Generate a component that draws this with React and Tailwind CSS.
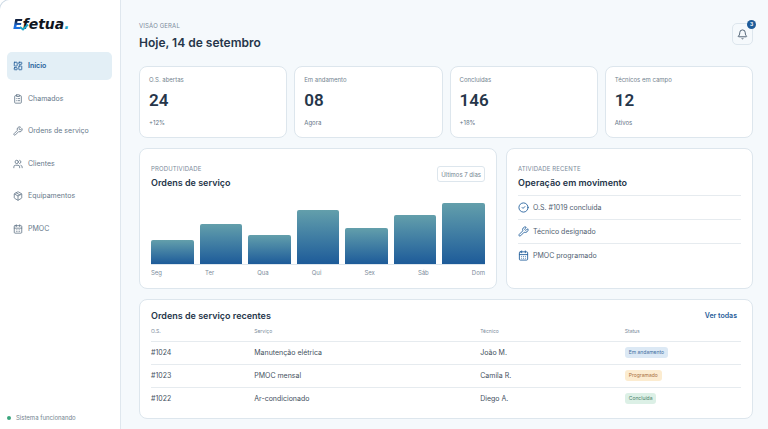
import {
  Bell,
  CalendarDays,
  CircleCheck,
  ClipboardList,
  LayoutDashboard,
  Package,
  Users,
  Wrench,
} from "lucide-react";

const navItems = [
  { label: "Início", icon: LayoutDashboard, active: true },
  { label: "Chamados", icon: ClipboardList },
  { label: "Ordens de serviço", icon: Wrench },
  { label: "Clientes", icon: Users },
  { label: "Equipamentos", icon: Package },
  { label: "PMOC", icon: CalendarDays },
];

const stats = [
  { label: "O.S. abertas", value: "24", note: "+12%" },
  { label: "Em andamento", value: "08", note: "Agora" },
  { label: "Concluídas", value: "146", note: "+18%" },
  { label: "Técnicos em campo", value: "12", note: "Ativos" },
];

const week = [
  { day: "Seg", value: 24 },
  { day: "Ter", value: 40 },
  { day: "Qua", value: 29 },
  { day: "Qui", value: 54 },
  { day: "Sex", value: 36 },
  { day: "Sáb", value: 49 },
  { day: "Dom", value: 61 },
];

const activities = [
  { label: "O.S. #1019 concluída", icon: CircleCheck },
  { label: "Técnico designado", icon: Wrench },
  { label: "PMOC programado", icon: CalendarDays },
];

const orders = [
  {
    id: "#1024",
    service: "Manutenção elétrica",
    tech: "João M.",
    status: "Em andamento",
    tone: "bg-[#dce9f5] text-[#3f6f9f]",
  },
  {
    id: "#1023",
    service: "PMOC mensal",
    tech: "Camila R.",
    status: "Programado",
    tone: "bg-[#fcecd0] text-[#a8703f]",
  },
  {
    id: "#1022",
    service: "Ar-condicionado",
    tech: "Diego A.",
    status: "Concluída",
    tone: "bg-[#dcf0e6] text-[#4a7f69]",
  },
];

function Logo() {
  return (
    <div className="relative ml-[6px] w-fit font-['DejaVu_Sans',sans-serif] font-bold italic text-[14px] leading-4 text-[#10151d]">
      <span className="bg-linear-to-b from-[#10203f] from-30% to-[#1b6fe0] to-60% bg-clip-text text-transparent">
        E
      </span>
      fetua<span className="text-[#22a7d0]">.</span>
      <svg
        className="absolute left-[6px] top-2 h-[7px] w-[10px]"
        viewBox="0 0 10 7"
        fill="none"
        stroke="#1fa3c4"
        strokeWidth="2"
        aria-hidden="true"
      >
        <path d="M1 3 L4 5.5 L9 0.5" />
      </svg>
    </div>
  );
}

function Sidebar() {
  return (
    <aside className="flex w-[121px] shrink-0 flex-col border-r border-[#dfe7ee] bg-white px-[7px] pt-4 pb-[6px]">
      <Logo />
      <nav className="mt-5 flex h-[191px] flex-col justify-between">
        {navItems.map(({ label, icon: Icon, active }) => (
          <a
            key={label}
            href="#"
            className={`flex h-7 items-center gap-[5px] rounded-[5px] px-[6px] mr-[1px] text-[7px] leading-3 ${
              active
                ? "bg-[#e3eff6] font-semibold text-[#1f5c99]"
                : "text-[#66788a]"
            }`}
          >
            <Icon className="size-[10px]" />
            {label}
          </a>
        ))}
      </nav>
      <p className="mt-auto flex items-center gap-[5px] text-[6px] leading-[10px] text-[#73838f]">
        <span className="size-1 rounded-full bg-[#3aa57c]" />
        Sistema funcionando
      </p>
    </aside>
  );
}

function Eyebrow({ children }) {
  return (
    <p className="text-[6px] leading-2 tracking-wide text-[#7b8b9b] uppercase">
      {children}
    </p>
  );
}

function StatCard({ label, value, note }) {
  return (
    <div className="rounded-lg border border-[#dde6ed] bg-white px-[9px] pt-[9px] pb-[10px]">
      <p className="text-[6px] leading-2 text-[#73838f]">{label}</p>
      <p className="my-[6px] font-['Roboto',sans-serif] text-[17px] leading-5 font-semibold text-[#26364a]">
        {value}
      </p>
      <p className="mt-[9px] text-[6px] leading-2 text-[#5f7485]">{note}</p>
    </div>
  );
}

function Productivity() {
  return (
    <section className="flex flex-col rounded-lg border border-[#dde6ed] bg-white px-[11px] pt-4 pb-[11px]">
      <div className="flex items-start justify-between">
        <div>
          <Eyebrow>Produtividade</Eyebrow>
          <h2 className="mt-1 text-[9px] leading-3 font-semibold text-[#26364a]">
            Ordens de serviço
          </h2>
        </div>
        <button className="mt-[1px] h-4 rounded-[3px] border border-[#dde6ed] px-[3px] text-[6px] text-[#73838f]">
          Últimos 7 dias
        </button>
      </div>
      <div className="mt-auto flex items-end gap-[6px] border-b border-[#dde6ed]">
        {week.map(({ day, value }) => (
          <div
            key={day}
            className="flex-1 rounded-t-[2px] bg-linear-to-b from-[#639fab] to-[#1d5b99]"
            style={{ height: value }}
          />
        ))}
      </div>
      <div className="mt-1 flex justify-between text-[6px] leading-2 text-[#7b8b9b]">
        {week.map(({ day }) => (
          <span key={day}>{day}</span>
        ))}
      </div>
    </section>
  );
}

function Activity() {
  return (
    <section className="rounded-lg border border-[#dde6ed] bg-white px-[11px] pt-4">
      <Eyebrow>Atividade recente</Eyebrow>
      <h2 className="mt-1 text-[9px] leading-3 font-semibold text-[#26364a]">
        Operação em movimento
      </h2>
      <ul className="mt-[6px]">
        {activities.map(({ label, icon: Icon }) => (
          <li
            key={label}
            className="flex h-6 items-center gap-1 border-t border-[#e6ebef] text-[7px] leading-3 text-[#4f6070]"
          >
            <Icon className="size-[11px] text-[#2a659f]" />
            {label}
          </li>
        ))}
      </ul>
    </section>
  );
}

function RecentOrders() {
  return (
    <section className="mt-[10px] rounded-lg border border-[#dde6ed] bg-white px-[11px] pt-[10px] pb-2">
      <div className="flex items-center justify-between">
        <h2 className="text-[9px] leading-3 font-semibold text-[#26364a]">
          Ordens de serviço recentes
        </h2>
        <a href="#" className="mr-1 text-[7px] leading-3 font-semibold text-[#1f5c99]">
          Ver todas
        </a>
      </div>
      <table className="w-full table-fixed text-left text-[7px] leading-3 text-[#3f5060]">
        <thead>
          <tr className="h-[19px] text-[5px] text-[#7b8b9b]">
            <th className="w-[17.5%] font-normal">O.S.</th>
            <th className="w-[38.3%] font-normal">Serviço</th>
            <th className="w-[24.5%] font-normal">Técnico</th>
            <th className="font-normal">Status</th>
          </tr>
        </thead>
        <tbody>
          {orders.map((order) => (
            <tr key={order.id} className="h-[23px] border-t border-[#e6ebef]">
              <td>{order.id}</td>
              <td>{order.service}</td>
              <td>{order.tech}</td>
              <td>
                <span
                  className={`block w-fit rounded-[3px] px-1 text-[5px] leading-[11px] ${order.tone}`}
                >
                  {order.status}
                </span>
              </td>
            </tr>
          ))}
        </tbody>
      </table>
    </section>
  );
}

export default function App() {
  return (
    <div className="flex min-h-screen overflow-hidden rounded-tl-[10px] ring-1 ring-[#cfdbe6] bg-[#f5f9fc] font-['Inter',sans-serif]">
      <Sidebar />
      <main className="min-w-0 flex-1 pt-[22px] pr-[15px] pb-[10px] pl-[18px]">
        <header className="flex items-start justify-between">
          <div>
            <Eyebrow>Visão geral</Eyebrow>
            <h1 className="mt-[5px] text-[12px] leading-4 font-semibold text-[#26364a]">
              Hoje, 14 de setembro
            </h1>
          </div>
          <button
            aria-label="Notificações"
            className="relative mt-[1px] flex h-[22px] w-[21px] items-center justify-center rounded-[5px] border border-[#dde6ed] text-[#44566a]"
          >
            <Bell className="size-[11px]" />
            <span className="absolute -top-1 -right-1 flex size-[9px] items-center justify-center rounded-full bg-[#1d5b99] text-[5px] font-bold text-white">
              3
            </span>
          </button>
        </header>
        <div className="mt-[15px] grid grid-cols-4 gap-[7px]">
          {stats.map((stat) => (
            <StatCard key={stat.label} {...stat} />
          ))}
        </div>
        <div className="mt-[10px] grid min-h-[141px] grid-cols-[1.45fr_1fr] gap-[9px]">
          <Productivity />
          <Activity />
        </div>
        <RecentOrders />
      </main>
    </div>
  );
}
